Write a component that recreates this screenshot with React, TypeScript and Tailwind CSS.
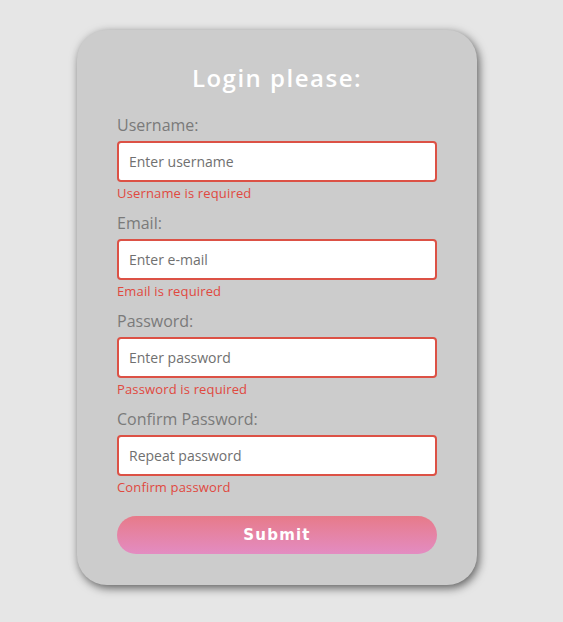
const fields = [
  { label: 'Username:', placeholder: 'Enter username', type: 'text', error: 'Username is required' },
  { label: 'Email:', placeholder: 'Enter e-mail', type: 'email', error: 'Email is required' },
  { label: 'Password:', placeholder: 'Enter password', type: 'password', error: 'Password is required' },
  { label: 'Confirm Password:', placeholder: 'Repeat password', type: 'password', error: 'Confirm password' },
];

const App = () => {
  return (
    <div className="min-h-[622px] bg-[#e6e6e6] pt-[30px] font-['Open_Sans',sans-serif]">
      <form
        className="ml-[77px] w-[400px] h-[555px] rounded-[30px] bg-[#cccccc] px-10 pt-[32px] shadow-[2px_3px_10px_rgba(0,0,0,0.6)]"
        onSubmit={(e) => e.preventDefault()}
      >
        <h1 className="text-center text-[24px] leading-8 font-semibold tracking-[1.5px] text-white">Login please:</h1>

        <div className="mt-5">
          {fields.map((field) => (
            <div key={field.label} className="mb-[10px]">
              <label className="block text-[16px] leading-[22px] text-[#7a7a7a]">{field.label}</label>
              <input
                type={field.type}
                placeholder={field.placeholder}
                className="mt-[5px] block h-[41px] w-full rounded-[4px] border-2 border-[#dc5145] bg-white px-[10px] text-[14px] text-[#555] placeholder:text-[#707070] outline-none"
              />
              <p className="mt-[2px] text-[13px] leading-[18px] tracking-[0.15px] text-[#e0493f]">{field.error}</p>
            </div>
          ))}
        </div>

        <button
          type="submit"
          className="mt-[10px] h-[38px] w-full rounded-full bg-gradient-to-b from-[#e77a89] to-[#e38cc2] font-['DejaVu_Sans',sans-serif] text-[15px] font-bold tracking-[1.2px] text-white"
        >
          Submit
        </button>
      </form>
    </div>
  );
};

export default App;
